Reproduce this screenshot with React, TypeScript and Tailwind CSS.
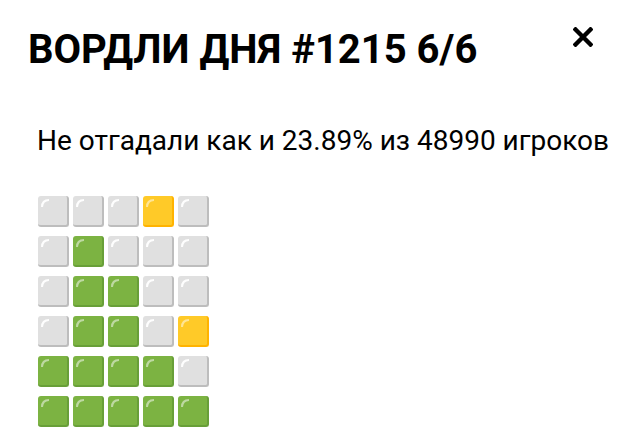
import React from "react";

type Cell = "g" | "y" | "w";

const ROWS: Cell[][] = [
  ["w", "w", "w", "y", "w"],
  ["w", "g", "w", "w", "w"],
  ["w", "g", "g", "w", "w"],
  ["w", "g", "g", "w", "y"],
  ["g", "g", "g", "g", "w"],
  ["g", "g", "g", "g", "g"],
];

const TILE: Record<Cell, string> = {
  g: "bg-[#7cb342] border-[#689f38]",
  y: "bg-[#ffca28] border-[#ffb300]",
  w: "bg-[#e0e0e0] border-[#bdbdbd]",
};

function Tile({ kind }: { kind: Cell }) {
  return (
    <div className={`relative w-[31px] h-[31px] rounded-[3px] border-r-2 border-b-2 ${TILE[kind]}`}>
      <svg className="absolute left-[2px] top-[2px]" width="10" height="10" viewBox="0 0 10 10">
        <path d="M1 9 Q1 1 9 1 L9 3 Q3.5 3 3 9 Z" fill="#fff" fillOpacity={kind === "w" ? 0.95 : 0.5} />
      </svg>
    </div>
  );
}

export default function App() {
  return (
    <div className="w-[627px] h-[447px] bg-white font-['Roboto',sans-serif] text-black relative">
      <div className="flex items-start justify-between pl-[28px] pr-[34px] pt-[26px]">
        <h1 className="text-[40px] font-bold leading-[48px]">ВОРДЛИ ДНЯ #1215 6/6</h1>
        <button className="mt-[1px] w-[20px] h-[20px] flex items-center justify-center">
          <svg width="20" height="20" viewBox="0 0 20 20">
            <path d="M2.5 2.5 L17.5 17.5 M17.5 2.5 L2.5 17.5" stroke="#000" strokeWidth="4.4" strokeLinecap="square" />
          </svg>
        </button>
      </div>
      <p className="pl-[37px] mt-[52px] text-[28px] leading-[30px]">
        Не отгадали как и 23.89% из 48990 игроков
      </p>
      <div className="pl-[38px] mt-[40px] flex flex-col gap-[9px]">
        {ROWS.map((row, i) => (
          <div key={i} className="flex gap-[4px]">
            {row.map((c, j) => (
              <Tile key={j} kind={c} />
            ))}
          </div>
        ))}
      </div>
    </div>
  );
}
